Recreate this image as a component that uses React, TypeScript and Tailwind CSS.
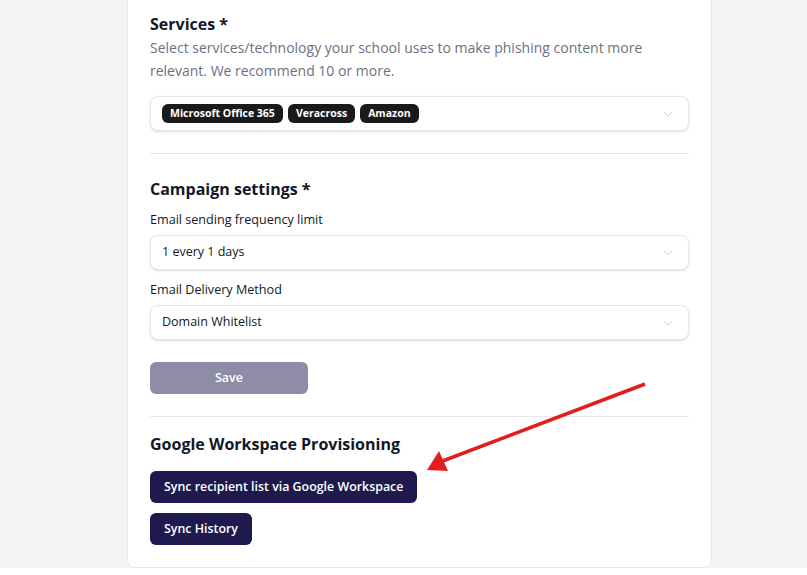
import { ChevronDown } from 'lucide-react'

function Select({ children }: { children: React.ReactNode }) {
    return (
        <div className="flex flex-row items-center justify-between h-[35px] w-full rounded-lg border border-gray-200 bg-white pl-[11px] pr-3 shadow-sm">
            <div className="flex flex-row items-center gap-[5px]">{children}</div>
            <ChevronDown className="w-4 h-4 text-gray-300" strokeWidth={1.5} />
        </div>
    )
}

function Chip({ label }: { label: string }) {
    return (
        <span className="flex items-center h-[19px] px-2 rounded-md bg-[#1a1a1a] text-white text-[10.5px] font-bold">{label}</span>
    )
}

export default function App() {
    return (
        <div className="relative min-h-[575px] w-full bg-[#f3f4f6] font-['Open_Sans',sans-serif] text-[#111827]">
            <div className="ml-[127px] w-[585px] -mt-2 bg-white border border-gray-200 rounded-b-lg px-[22px] pt-[19px] pb-[22px]">
                <h2 className="text-[16px] font-bold leading-6">Services *</h2>
                <p className="text-[14px] leading-[23px] text-gray-500">
                    Select services/technology your school uses to make phishing content more relevant. We recommend 10 or more.
                </p>
                <div className="mt-[14px]">
                    <Select>
                        <Chip label="Microsoft Office 365" />
                        <Chip label="Veracross" />
                        <Chip label="Amazon" />
                    </Select>
                </div>

                <div className="border-t border-gray-200 mt-[22px]" />

                <h2 className="text-[16px] font-bold leading-6 mt-[23px]">Campaign settings *</h2>
                <label className="block text-[12.6px] font-medium mt-[9px] leading-5">Email sending frequency limit</label>
                <div className="mt-[5px]">
                    <Select>
                        <span className="text-[12.5px]">1 every 1 days</span>
                    </Select>
                </div>
                <label className="block text-[12.6px] font-medium mt-[10px] leading-5">Email Delivery Method</label>
                <div className="mt-[5px]">
                    <Select>
                        <span className="text-[12.5px]">Domain Whitelist</span>
                    </Select>
                </div>

                <button className="mt-[22px] w-[158px] h-[32px] rounded-md bg-[#8e8ca6] text-white text-[12.5px] font-semibold">Save</button>

                <div className="border-t border-gray-200 mt-[22px]" />

                <h2 className="text-[16px] font-bold leading-6 mt-[15px]">Google Workspace Provisioning</h2>
                <div className="flex flex-col items-start gap-[10px] mt-[15px]">
                    <button className="h-[32px] px-[14px] rounded-md bg-[#1e1a4d] text-white text-[12.4px] font-semibold">Sync recipient list via Google Workspace</button>
                    <button className="h-[32px] px-[14px] rounded-md bg-[#1e1a4d] text-white text-[12.4px] font-semibold">Sync History</button>
                </div>
            </div>

            <svg className="absolute left-0 top-0 pointer-events-none" width="807" height="575">
                <line x1="645" y1="392" x2="440" y2="470" stroke="#e11d1d" strokeWidth="3.5" />
                <polygon points="427,478 439,459 448,479" fill="#e11d1d" />
            </svg>
        </div>
    )
}
